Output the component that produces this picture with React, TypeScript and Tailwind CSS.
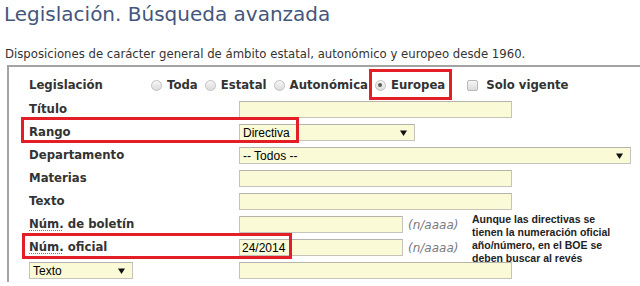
import type { ReactNode } from "react";

const sans = "font-['DejaVu_Sans','Verdana',sans-serif]";
const arial = "font-['Liberation_Sans','Arial',sans-serif]";

const fieldBox = "h-[17px] shrink-0 border border-[#c4c4bc] border-t-[#b4b4ac] bg-[#fafad6]";

function Caret() {
  return (
    <svg width="7" height="6" viewBox="0 0 7 6" className="shrink-0">
      <path d="M0 0.5h7L3.5 6z" fill="#111" />
    </svg>
  );
}

function Field({ width, value }: { width: string; value?: string }) {
  return (
    <div className={`${fieldBox} ${width} flex items-center pl-[2px] text-[12px] leading-none text-black ${arial}`}>
      {value}
    </div>
  );
}

function Select({ width, value }: { width: string; value: string }) {
  return (
    <div
      className={`${fieldBox} ${width} flex items-center justify-between pl-[3px] pr-[7px] text-[12px] leading-none text-black ${arial}`}
    >
      <span>{value}</span>
      <Caret />
    </div>
  );
}

function Radio({ checked = false }: { checked?: boolean }) {
  return (
    <span className="flex h-[11px] w-[11px] shrink-0 items-center justify-center rounded-full border border-[#c2c2c2] bg-gradient-to-b from-[#f6f6f6] to-[#dcdcdc]">
      {checked && <span className="h-[4px] w-[4px] rounded-full bg-[#5a5a5a]" />}
    </span>
  );
}

function Row({ label, children }: { label: ReactNode; children: ReactNode }) {
  return (
    <div className="flex h-[23px] items-center">
      <div className="w-[210px] shrink-0 text-[11.7px] font-bold text-[#333]">{label}</div>
      {children}
    </div>
  );
}

function Num() {
  return <abbr className="no-underline [text-decoration:underline_dotted_#777] underline-offset-2">Núm.</abbr>;
}

const hint = `ml-[5px] text-[12px] italic text-[#7a7a7a] ${sans}`;

export default function App() {
  return (
    <div className={`relative h-[286px] w-[640px] overflow-hidden bg-white ${sans}`}>
      <h1 className="pl-[4px] pt-[2px] text-[20px] leading-[24px] text-[#44567b]">Legislación. Búsqueda avanzada</h1>
      <p className="mt-[21px] pl-[5px] text-[11.7px] leading-[14px] text-[#333]">
        Disposiciones de carácter general de ámbito estatal, autonómico y europeo desde 1960.
      </p>

      <div className="ml-[7px] mt-[4px] border-l-2 border-t-2 border-[#a3a3a3] pl-[20px] pt-[6px]">
        <div className="flex h-[25px] items-center text-[11.7px] font-bold text-[#333]">
          <div className="w-[122px] shrink-0">Legislación</div>
          <div className="flex items-center gap-[7px]">
            {["Toda", "Estatal", "Autonómica"].map((opt) => (
              <label key={opt} className="flex items-center gap-[5px]">
                <Radio />
                {opt}
              </label>
            ))}
            <label className="flex items-center gap-[5px]">
              <Radio checked />
              Europea
            </label>
          </div>
          <label className="ml-[22px] flex items-center gap-[8px]">
            <span className="h-[11px] w-[11px] rounded-[2px] border border-[#b8b8b8] bg-gradient-to-b from-[#f6f6f6] to-[#dcdcdc]" />
            Solo vigente
          </label>
        </div>

        <Row label="Título">
          <Field width="w-[273px]" />
        </Row>
        <Row label="Rango">
          <Select width="w-[176px]" value="Directiva" />
        </Row>
        <Row label="Departamento">
          <Select width="w-[392px]" value="-- Todos --" />
        </Row>
        <Row label="Materias">
          <Field width="w-[273px]" />
        </Row>
        <Row label="Texto">
          <Field width="w-[273px]" />
        </Row>

        <div className="flex">
          <div className="w-[443px] shrink-0">
            <Row
              label={
                <>
                  <Num /> de boletín
                </>
              }
            >
              <Field width="w-[164px]" />
              <span className={hint}>(n/aaaa)</span>
            </Row>
            <Row
              label={
                <>
                  <Num /> oficial
                </>
              }
            >
              <Field width="w-[164px]" value="24/2014" />
              <span className={hint}>(n/aaaa)</span>
            </Row>
          </div>
          <p className={`h-[46px] w-[150px] text-[10.5px] font-bold leading-[13px] text-[#222] ${arial}`}>
            Aunque las directivas se tienen la numeración oficial año/número, en el BOE se deben buscar al revés
          </p>
        </div>

        <div className="flex h-[23px] items-center">
          <div className="w-[210px] shrink-0">
            <Select width="w-[104px]" value="Texto" />
          </div>
          <Field width="w-[273px]" />
        </div>
      </div>

      {/* annotation boxes */}
      <div className="absolute left-[369px] top-[69px] h-[31px] w-[83px] border-[3px] border-[#e31e26]" />
      <div className="absolute left-[21px] top-[117px] h-[26px] w-[278px] border-[3px] border-[#e31e26]" />
      <div className="absolute left-[22px] top-[233px] h-[26px] w-[270px] border-[3px] border-[#e31e26]" />
    </div>
  );
}
